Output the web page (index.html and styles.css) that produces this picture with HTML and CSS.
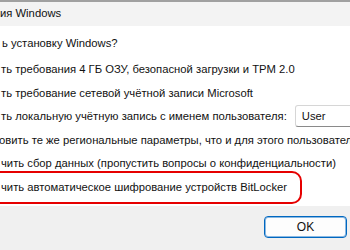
FILE: index.html
```html
<!DOCTYPE html>
<html lang="ru">
<head>
    <meta charset="UTF-8">
    <meta name="viewport" content="width=device-width, initial-scale=1.0">
    <title>Настройка Windows</title>
    <link rel="stylesheet" href="styles.css">
</head>
<body>
    <div class="dialog">
        <div class="titlebar">ия Windows</div>

        <div class="content">
            <p class="question">ь установку Windows?</p>

            <div class="options">
                <div class="option">ть требования 4 ГБ ОЗУ, безопасной загрузки и TPM 2.0</div>
                <div class="option">ть требование сетевой учётной записи Microsoft</div>
                <div class="option">
                    <span>ть локальную учётную запись с именем пользователя:</span>
                    <input type="text" class="username" value="User" aria-label="Имя пользователя">
                </div>
                <div class="option cut">овить те же региональные параметры, что и для этого пользователя</div>
                <div class="option">чить сбор данных (пропустить вопросы о конфиденциальности)</div>
                <div class="option">
                    <span class="highlight">чить автоматическое шифрование устройств BitLocker</span>
                </div>
            </div>
        </div>

        <div class="footer">
            <button type="button" class="btn-ok">OK</button>
        </div>
    </div>
</body>
</html>
```

FILE: styles.css
```css
:root {
    --text-color: #111;
    --titlebar-bg: #f3f3f3;
    --footer-bg: #f0f0f0;
    --accent: #0067c0;
    --mark: #e60000;
}

* {
    margin: 0;
    padding: 0;
    box-sizing: border-box;
}

body {
    width: 350px;
    height: 250px;
    overflow: hidden;
    background: #fff;
    color: var(--text-color);
    font-family: 'Liberation Sans', Arial, sans-serif;
    font-size: 11.25px;
}

.dialog {
    display: flex;
    flex-direction: column;
    height: 250px;
}

.titlebar {
    height: 26px;
    background: var(--titlebar-bg);
    border-top: 2px solid #a0a0a0;
    line-height: 23px;
    white-space: nowrap;
}

.content {
    height: 180px;
    padding-left: 1px;
    white-space: nowrap;
}

.question {
    margin-top: 7px;
    height: 20px;
    line-height: 20px;
    padding-left: 1px;
}

.options {
    display: flex;
    flex-direction: column;
    justify-content: space-between;
    height: 138px;
    margin-top: 6px;
}

.option {
    display: flex;
    align-items: center;
    height: 20px;
    line-height: 20px;
}

.option.cut {
    margin-left: -2px;
}

.username {
    flex: none;
    width: 80px;
    height: 22px;
    margin-left: 8px;
    padding: 0 6px;
    border: 1px solid #d6d6d6;
    border-bottom-color: #8a8a8a;
    border-radius: 3px;
    background: #fff;
    font: inherit;
    color: var(--text-color);
    outline: none;
}

.highlight {
    position: relative;
}

/* red annotation drawn over the last option */
.highlight::after {
    content: "";
    position: absolute;
    left: -24px;
    right: -15px;
    top: -6px;
    bottom: -7px;
    border: 2px solid var(--mark);
    border-radius: 10px;
}

.footer {
    flex: 1;
    display: flex;
    justify-content: flex-end;
    align-items: flex-start;
    padding-top: 10px;
    background: var(--footer-bg);
}

.btn-ok {
    width: 83px;
    height: 22px;
    margin-right: 3px;
    border: 1px solid var(--accent);
    box-shadow: inset 0 0 0 1px rgba(0, 103, 192, 0.45);
    border-radius: 4px;
    background: #fdfdfd;
    color: var(--text-color);
    font: inherit;
    font-size: 12px;
    cursor: pointer;
}
```
